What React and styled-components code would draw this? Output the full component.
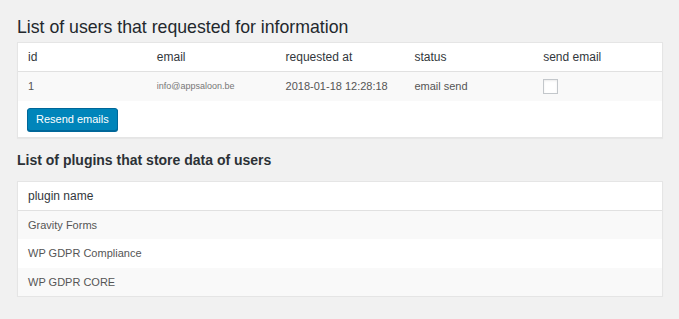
import React from "react";
import styled, { createGlobalStyle } from "styled-components";

const GlobalStyle = createGlobalStyle`
  html, body {
    margin: 0;
    padding: 0;
    background: #f1f1f1;
  }
  body {
    font-family: "Liberation Sans", Arial, sans-serif;
    color: #444;
  }
`;

const Wrap = styled.div`
  padding: 17px 16px 0 17px;
  width: 646px;
`;

const Title = styled.h2`
  margin: 0 0 5px;
  font-size: 17.7px;
  font-weight: 400;
  line-height: 20px;
  color: #23282d;
`;

const SubTitle = styled.h3`
  margin: 13px 0 12px;
  font-size: 14px;
  font-weight: 700;
  line-height: 18px;
  color: #2c3136;
`;

const Card = styled.div`
  background: #fff;
  border: 1px solid #e5e5e5;
  box-shadow: 0 1px 1px rgba(0, 0, 0, 0.04);
`;

const Table = styled.table`
  width: 100%;
  border-collapse: collapse;
  table-layout: fixed;
`;

const Th = styled.th`
  text-align: left;
  font-weight: 400;
  font-size: 12px;
  color: #32373c;
  height: 28px;
  padding: 0 10px;
  border-bottom: 1px solid #e1e1e1;
  white-space: nowrap;
`;

const Tr = styled.tr`
  background: ${(p) => (p.$alt ? "#f9f9f9" : "#fff")};
`;

const Td = styled.td`
  font-size: ${(p) => (p.$small ? "9px" : "11px")};
  color: ${(p) => (p.$small ? "#777" : "#555")};
  height: 28.6px;
  padding: 0 10px;
  white-space: nowrap;
`;

const Check = styled.span`
  display: inline-block;
  width: 13px;
  height: 13px;
  border: 1px solid #c3c7cb;
  background: #fff;
  box-shadow: inset 0 1px 2px rgba(0, 0, 0, 0.08);
  vertical-align: middle;
  margin-top: 1px;
`;

const Footer = styled.div`
  padding: 7px 9px 6px;
`;

const Button = styled.button`
  display: block;
  font-family: inherit;
  font-size: 11px;
  color: #fff;
  background: #0085ba;
  border: 1px solid #006799;
  border-radius: 3px;
  box-shadow: 0 1px 0 #006799;
  height: 23px;
  padding: 0 8px;
  line-height: 21px;
`;

const plugins = ["Gravity Forms", "WP GDPR Compliance", "WP GDPR CORE"];

export default function App() {
  return (
    <>
      <GlobalStyle />
      <Wrap>
        <Title>List of users that requested for information</Title>
        <Card>
          <Table>
            <thead>
              <tr>
                <Th>id</Th>
                <Th>email</Th>
                <Th>requested at</Th>
                <Th>status</Th>
                <Th>send email</Th>
              </tr>
            </thead>
            <tbody>
              <Tr $alt>
                <Td>1</Td>
                <Td $small>info@appsaloon.be</Td>
                <Td>2018-01-18 12:28:18</Td>
                <Td>email send</Td>
                <Td>
                  <Check />
                </Td>
              </Tr>
            </tbody>
          </Table>
          <Footer>
            <Button>Resend emails</Button>
          </Footer>
        </Card>

        <SubTitle>List of plugins that store data of users</SubTitle>
        <Card>
          <Table>
            <thead>
              <tr>
                <Th>plugin name</Th>
              </tr>
            </thead>
            <tbody>
              {plugins.map((name, i) => (
                <Tr key={name} $alt={i % 2 === 0}>
                  <Td>{name}</Td>
                </Tr>
              ))}
            </tbody>
          </Table>
        </Card>
      </Wrap>
    </>
  );
}
